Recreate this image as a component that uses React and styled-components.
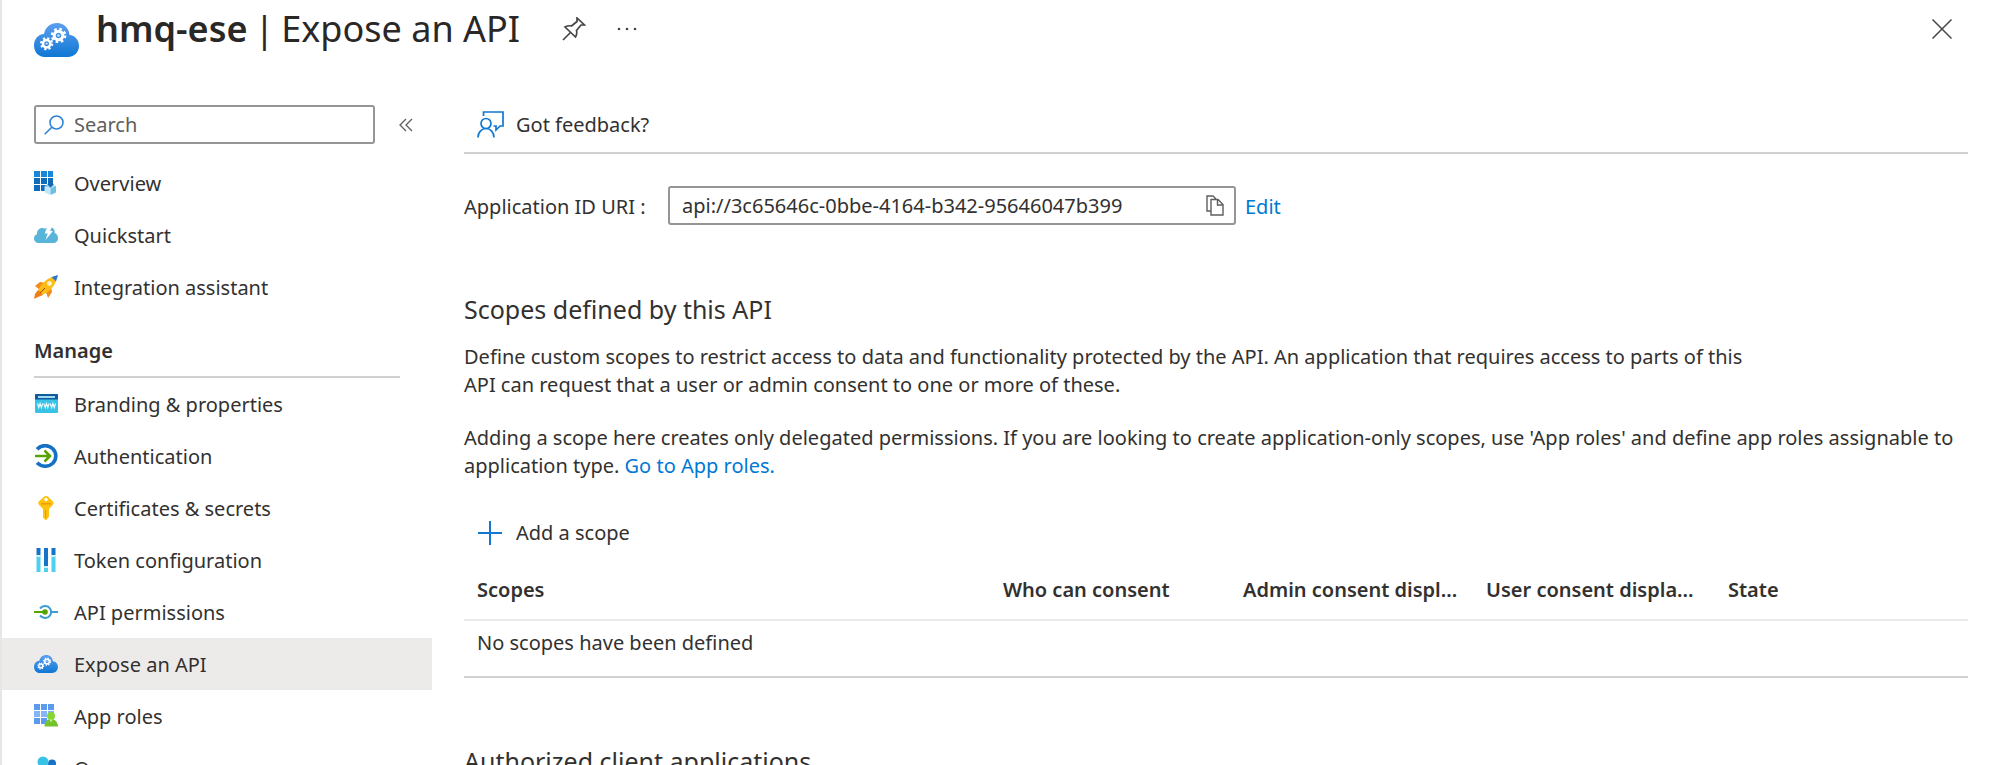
// App registration detail page. Left menu + "Expose an API" content.

import React from 'react';
import styled, { createGlobalStyle } from 'styled-components';

const App = () => {
  return (
    <>
      <GlobalStyle />
      <Page>
        <Header>
          <CloudGears width="45" height="34" />
          <Title>
            <strong>hmq-ese</strong>
            <span>|</span>
            <span>Expose an API</span>
          </Title>
          <IconButton aria-label="Pin">
            <PinIcon />
          </IconButton>
          <IconButton aria-label="More">
            <DotsIcon />
          </IconButton>
          <CloseButton aria-label="Close">
            <CloseIcon />
          </CloseButton>
        </Header>
        <Body>
          <SideMenu />
          <ExposeApi />
        </Body>
      </Page>
    </>
  );
};

// Left menu
const topMenu = [
  { label: 'Overview', icon: () => <OverviewIcon /> },
  { label: 'Quickstart', icon: () => <QuickstartIcon /> },
  { label: 'Integration assistant', icon: () => <RocketIcon /> },
];

const manageMenu = [
  { label: 'Branding & properties', icon: () => <BrandingIcon /> },
  { label: 'Authentication', icon: () => <AuthIcon /> },
  { label: 'Certificates & secrets', icon: () => <KeyIcon /> },
  { label: 'Token configuration', icon: () => <TokenIcon /> },
  { label: 'API permissions', icon: () => <PermissionIcon /> },
  { label: 'Expose an API', icon: () => <CloudGears width="24" height="18" />, active: true },
  { label: 'App roles', icon: () => <RolesIcon /> },
  { label: 'Owners', icon: () => <OwnersIcon /> },
];

const MenuList = ({ items }) => (
  <List>
    {items.map((item) => (
      <li key={item.label}>
        <MenuLink href="#" $active={item.active} aria-current={item.active ? 'page' : undefined}>
          <MenuIcon>{item.icon()}</MenuIcon>
          <MenuLabel>{item.label}</MenuLabel>
        </MenuLink>
      </li>
    ))}
  </List>
);

const SideMenu = () => (
  <Side>
    <SearchRow>
      <SearchBox>
        <SearchIcon />
        <SearchInput type="text" placeholder="Search" aria-label="Search" />
      </SearchBox>
      <IconButton aria-label="Collapse menu">
        <CollapseIcon />
      </IconButton>
    </SearchRow>
    <MenuList items={topMenu} />
    <MenuTitle>Manage</MenuTitle>
    <MenuList items={manageMenu} />
  </Side>
);

// Content
const ExposeApi = () => (
  <Main>
    <Toolbar>
      <CommandButton>
        <FeedbackIcon />
        Got feedback?
      </CommandButton>
    </Toolbar>
    <UriRow>
      <UriLabel htmlFor="app-uri">Application ID URI :</UriLabel>
      <UriBox>
        <UriInput id="app-uri" type="text" readOnly value="api://3c65646c-0bbe-4164-b342-95646047b399" />
        <IconButton aria-label="Copy">
          <CopyIcon />
        </IconButton>
      </UriBox>
      <EditLink href="#">Edit</EditLink>
    </UriRow>
    <SectionTitle>Scopes defined by this API</SectionTitle>
    <Text $narrow>
      Define custom scopes to restrict access to data and functionality protected by the API. An application that
      requires access to parts of this API can request that a user or admin consent to one or more of these.
    </Text>
    <Text>
      Adding a scope here creates only delegated permissions. If you are looking to create application-only scopes, use
      'App roles' and define app roles assignable to application type. <Link href="#">Go to App roles.</Link>
    </Text>
    <CommandButton>
      <PlusIcon />
      Add a scope
    </CommandButton>
    <Table>
      <colgroup>
        <col />
        <Col $w={240} />
        <Col $w={243} />
        <Col $w={242} />
        <Col $w={253} />
      </colgroup>
      <thead>
        <tr>
          <Th>Scopes</Th>
          <Th>Who can consent</Th>
          <Th>Admin consent displ...</Th>
          <Th>User consent displa...</Th>
          <Th>State</Th>
        </tr>
      </thead>
      <tbody>
        <tr>
          <Td colSpan={5}>No scopes have been defined</Td>
        </tr>
      </tbody>
    </Table>
    <SectionTitle>Authorized client applications</SectionTitle>
  </Main>
);

// Icons
const Gear = ({ x, y, r }) => (
  <g fill="none" stroke="#fff" transform={`translate(${x} ${y}) scale(${r / 7})`}>
    <circle r="4" strokeWidth="2.8" />
    <circle r="6" strokeWidth="2.4" strokeDasharray="2.356 2.356" />
    <circle r="1.2" fill="#cfe4fa" stroke="none" />
  </g>
);

const CloudGears = ({ width, height }) => (
  <svg width={width} height={height} viewBox="0 0 45 34">
    <defs>
      <linearGradient id="cloud" x1="0" y1="0" x2="0" y2="1">
        <stop offset="0" stopColor="#5c9fee" />
        <stop offset="1" stopColor="#0f78d5" />
      </linearGradient>
    </defs>
    <path
      fill="url(#cloud)"
      d="M10.5 34C4.5 34 0 29 0 22.5 0 16 4 11.5 10 11 11 4.5 16.5 0 23 0c7 0 12 5 12.5 12C41 12.5 45 17 45 22.8 45 29 40.5 34 34 34z"
    />
    <Gear x={24.5} y={12.5} r={7.6} />
    <Gear x={12.6} y={20.7} r={6.4} />
  </svg>
);

const PinIcon = () => (
  <svg width="24" height="24" viewBox="0 0 24 24" fill="none" stroke="#484644" strokeWidth="1.7">
    <path d="M1 23l7.5-7.5M3 10c2.2-1.2 4.5-1.500 6.500-1l5.500-4.500V1l7.500 7H19l-4.500 5.500c.6 2.300.2 4.500-1 6.500z" />
  </svg>
);

const DotsIcon = () => (
  <svg width="20" height="4" viewBox="0 0 20 4" fill="#484644">
    <circle cx="2" cy="2" r="1.3" />
    <circle cx="10" cy="2" r="1.3" />
    <circle cx="18" cy="2" r="1.3" />
  </svg>
);

const CloseIcon = () => (
  <svg width="20" height="20" viewBox="0 0 20 20" stroke="#484644" strokeWidth="1.5">
    <path d="M.5.5l19 19M19.5.5l-19 19" />
  </svg>
);

const SearchIcon = () => (
  <svg width="20" height="20" viewBox="0 0 20 20" fill="none" stroke="#2f83d6" strokeWidth="1.6">
    <circle cx="12.5" cy="7.5" r="6.5" />
    <path d="M7.8 12.2L.7 19.3" />
  </svg>
);

const CollapseIcon = () => (
  <svg width="14" height="14" viewBox="0 0 14 14" fill="none" stroke="#605e5c" strokeWidth="1.3">
    <path d="M7 1L1 7l6 6M13 1L7 7l6 6" />
  </svg>
);

const FeedbackIcon = () => (
  <svg width="27" height="27" viewBox="0 0 27 27" fill="none" stroke="#1078d2" strokeWidth="1.7">
    <path d="M6.5 5V1H26v14h-3l-4 4v-4h-2.5" />
    <circle cx="9" cy="12.5" r="5" />
    <path d="M1 26.5c0-5 3.500-9 8-9s8 4 8 9" />
  </svg>
);

const CopyIcon = () => (
  <svg width="18" height="21" viewBox="0 0 18 21" fill="none" stroke="#605e5c" strokeWidth="1.4">
    <path d="M5 16H1V1h6l3 3M5 4.5h7l5 5V20H5zM11.5 5v5H17" />
  </svg>
);

const PlusIcon = () => (
  <svg width="27" height="26" viewBox="0 0 27 26" stroke="#1078d2" strokeWidth="2">
    <path d="M13 1v24M1 13h24" />
  </svg>
);

const OverviewIcon = () => (
  <svg width="24" height="24" viewBox="0 0 24 24">
    <path fill="#1a86d9" d="M0 0h6v6H0zM7 0h6v6H7zM14 0h5v6h-5z" />
    <path fill="#0f6cbd" d="M0 7h6v6H0zM7 7h6v6H7zM14 7h5v6h-5zM0 14h6v6H0zM7 14h6v6H7z" />
    <path fill="#9cd5f0" d="M10.500 15l5.500-2 6 2-5.500 2.500z" />
    <path fill="#c3e6f6" d="M10.500 15l6 2.500V24l-6-2.500z" />
    <path fill="#6cbfe4" d="M22 15l-5.500 2.500V24l5.500-2.500z" />
    <path fill="#1565b0" d="M15 10h3v3h2l-3.500 3.500L13 13h2z" />
  </svg>
);

const QuickstartIcon = () => (
  <svg width="24" height="18" viewBox="0 0 24 18">
    <path
      fill="#59b4d9"
      d="M5 17c-3 0-5-2-5-4.600 0-2 1.200-3.700 3-4.200C2.800 4.500 5 2 8.500 2c1 0 2 .3 2.700.8C12.500 1.500 14 1 15.500 1 19 1 21 3.500 20.800 7c2 .6 3.200 2.800 3.200 5.200 0 2.800-2 4.800-4.800 4.800z"
    />
    <path fill="#fff" d="M13.500 0h5l-2.500 5h3l-7.500 9 2.200-6.500h-3z" />
  </svg>
);

const RocketIcon = () => (
  <svg width="24" height="24" viewBox="0 0 24 24">
    <path fill="#f28a1c" d="M1 11l5-4 6 1-6 7zM17 12l1 5-4 6-2-6z" />
    <path fill="#fbbc16" d="M18 2C12 4 6 10 4 16l4 4c6-2 12-8 14-14z" />
    <path fill="#ef7d16" d="M4 15l5 5-5 2-4 2 1-5z" />
    <path fill="#2f73c4" d="M24 0l-6.500 2L22 6.500z" />
    <circle cx="15.5" cy="8.5" r="2.4" fill="#fff3c9" />
    <path stroke="#8f4a0c" strokeWidth="1" d="M6 18l5-5" />
  </svg>
);

const BrandingIcon = () => (
  <svg width="24" height="20" viewBox="0 0 24 20">
    <rect x="1" width="23" height="19" rx="1" fill="#37c2e6" />
    <path fill="#0f5b9c" d="M2 0h21a1 1 0 0 1 1 1v4.500H1V1a1 1 0 0 1 1-1z" />
    <path fill="#9fd9f2" d="M4 2h17v2H4z" />
    <path
      fill="none"
      stroke="#e6f9fe"
      strokeWidth="1.2"
      d="M3.500 9.500l1.300 4 1.300-4 1.300 4 1.300-4M9.900 9.500l1.300 4 1.300-4 1.300 4 1.300-4M16.300 9.500l1.300 4 1.300-4 1.300 4 1.300-4"
    />
  </svg>
);

const AuthIcon = () => (
  <svg width="24" height="24" viewBox="0 0 24 24" fill="none">
    <path stroke="#1470c4" strokeWidth="3.6" d="M3 5.200C8 0 15 1 18.800 4.800c4 4 4 10.400 0 14.400-4 3.800-10.800 4.400-15.800-.4" />
    <path stroke="#57a300" strokeWidth="2.6" d="M1 12h14M10.500 6.500L16 12l-5.500 5.500" />
  </svg>
);

const KeyIcon = () => (
  <svg width="24" height="24" viewBox="0 0 24 24">
    <path fill="#fdc310" d="M12 0c1 0 1.600.4 2.300 1l4.500 4.300c1 1 1 2.400 0 3.500L15 13v7.500L12.500 24h-1L9 21.500V13L5 8.800c-1-1.100-1-2.500 0-3.500L9.700 1c.7-.6 1.300-1 2.300-1z" />
    <path fill="#f09a0a" d="M7 7h10v1.400H7zM11 14h1.200v8H11z" />
    <circle cx="12" cy="3.4" r="1.7" fill="#fff" />
  </svg>
);

const TokenIcon = () => (
  <svg width="24" height="26" viewBox="0 0 24 26">
    <path fill="#50d0ee" d="M2.500 9h4v16h-4zM10 19h4v6h-4zM17.500 9h4v16h-4z" />
    <path fill="#1673c8" d="M2.500 1h4v7h-4zM10 1h4v19h-4zM17.500 1h4v7h-4z" />
    <path fill="#c8f2fb" d="M2.500 8h4v2h-4zM10 19h4v2h-4zM17.500 8h4v2h-4z" />
  </svg>
);

const PermissionIcon = () => (
  <svg width="24" height="14" viewBox="0 0 24 14" fill="none">
    <path stroke="#3f9bd3" strokeWidth="2" d="M6 3.500c3-3.500 8-3.200 10 0 1.400 2.200 1.400 4.800 0 7-2 3.200-7 3.500-10 0M17.500 7H24" />
    <path stroke="#57a300" strokeWidth="2" d="M0 7h10" />
    <circle cx="11" cy="7" r="2.8" fill="#57a300" />
  </svg>
);

const RolesIcon = () => (
  <svg width="24" height="24" viewBox="0 0 24 24">
    <path fill="#5a9bee" d="M0 0h6v6H0zM7 0h6v6H7zM14 0h6v6h-6zM0 14h6v6H0zM7 14h6v6H7z" />
    <path fill="#84b6f5" d="M0 7h6v6H0zM7 7h6v6H7zM14 7h6v6h-6z" />
    <path fill="#76c22c" d="M10.500 22.500c0-4 2.500-7.500 6.500-7.500s7 3.500 7 7.500z" />
    <circle cx="17" cy="12" r="4" fill="#86d633" />
    <path fill="#c8efa0" d="M15.500 15.500h3L17 18.500z" />
  </svg>
);

const OwnersIcon = () => (
  <svg width="24" height="24" viewBox="0 0 24 24">
    <circle cx="18" cy="7.5" r="4" fill="#1673c8" />
    <path fill="#1673c8" d="M12 20c0-4 2.500-7 6-7s6 3 6 7z" />
    <circle cx="9" cy="6" r="5.5" fill="#37c2e6" />
    <path fill="#37c2e6" d="M0 23c0-6 3.500-10 9-10s9 4 9 10z" />
  </svg>
);

const GlobalStyle = createGlobalStyle`
  * {
    box-sizing: border-box;
  }
  body {
    margin: 0;
    background: #fff;
    color: #323130;
    font-family: 'Noto Sans', 'Open Sans', sans-serif;
    font-size: 20px;
    line-height: 28px;
  }
  button, input {
    font: inherit;
    color: inherit;
  }
  svg {
    display: block;
    flex-shrink: 0;
  }
`;

const Page = styled.div`
  height: 100vh;
  overflow: hidden;
  border-left: 2px solid #e6e6e6;
`;
const Header = styled.header`
  display: flex;
  align-items: center;
  height: 80px;
  padding: 0 47px 0 32px;
`;
const Title = styled.h1`
  display: flex;
  gap: 7px;
  margin: 0 42px 22px 17px;
  font-size: 36px;
  line-height: 58px;
  font-weight: 400;
  white-space: nowrap;
  color: #292827;
  strong {
    font-weight: 600;
  }
`;
const IconButton = styled.button`
  display: flex;
  padding: 0;
  border: 0;
  background: none;
  ${Header} & {
    margin: 0 31px 22px 0;
  }
`;
const CloseButton = styled(IconButton)`
  ${Header} && {
    margin: 0 0 22px auto;
  }
`;
const Body = styled.div`
  display: flex;
  align-items: flex-start;
`;
const Side = styled.nav`
  width: 430px;
  flex-shrink: 0;
  padding-top: 25px;
`;
const SearchRow = styled.div`
  display: flex;
  align-items: center;
  gap: 24px;
  margin-bottom: 13px;
  padding-left: 32px;
`;
const SearchBox = styled.div`
  display: flex;
  align-items: center;
  gap: 10px;
  width: 341px;
  height: 39px;
  padding: 0 8px;
  border: 2px solid #979593;
  border-radius: 3px;
`;
const SearchInput = styled.input`
  flex: 1;
  min-width: 0;
  padding: 0;
  border: 0;
  outline: 0;
  background: none;
  &::placeholder {
    color: #605e5c;
    opacity: 1;
  }
`;
const List = styled.ul`
  margin: 0;
  padding: 0;
  list-style: none;
`;
const MenuLink = styled.a`
  display: flex;
  align-items: center;
  gap: 16px;
  height: 52px;
  padding-left: 32px;
  color: inherit;
  text-decoration: none;
  white-space: nowrap;
  background: ${(props) => (props.$active ? '#edebe9' : 'none')};
`;
const MenuIcon = styled.span`
  display: flex;
  justify-content: center;
  width: 24px;
`;
const MenuLabel = styled.span`
  padding-top: 2px;
`;
const MenuTitle = styled.h2`
  margin: 0 32px;
  padding: 24px 0 11px;
  border-bottom: 2px solid #d2d0ce;
  font-size: 20px;
  line-height: 28px;
  font-weight: 600;
`;
const Main = styled.main`
  flex: 1;
  min-width: 0;
  padding: 17px 31px 0 32px;
`;
const Toolbar = styled.div`
  display: flex;
  align-items: center;
  height: 57px;
  border-bottom: 2px solid #d2d0ce;
`;
const CommandButton = styled.button`
  display: flex;
  align-items: center;
  gap: 12px;
  height: 56px;
  padding: 0 13px;
  border: 0;
  background: none;
`;
const UriRow = styled.div`
  display: flex;
  align-items: center;
  gap: 9px;
  margin: 32px 0 66px;
`;
const UriLabel = styled.label`
  width: 195px;
  padding-top: 2px;
`;
const UriBox = styled.div`
  display: flex;
  align-items: center;
  width: 568px;
  height: 39px;
  padding: 0 10px 0 12px;
  border: 2px solid #979593;
  border-radius: 3px;
`;
const UriInput = styled.input`
  flex: 1;
  min-width: 0;
  padding: 0;
  border: 0;
  outline: 0;
  background: none;
`;
const Link = styled.a`
  color: #0078d4;
  text-decoration: none;
`;
const EditLink = styled(Link)`
  padding-top: 2px;
`;
const SectionTitle = styled.h2`
  margin: 0 0 16px;
  font-size: 25px;
  line-height: 36px;
  font-weight: 400;
`;
const Text = styled.p`
  max-width: ${(props) => (props.$narrow ? '1300px' : 'none')};
  margin: 0 0 25px;
`;
const Table = styled.table`
  width: 100%;
  margin-bottom: 65px;
  border-collapse: collapse;
  table-layout: fixed;
  border-bottom: 2px solid #d2d0ce;
`;
const Col = styled.col`
  width: ${(props) => props.$w}px;
`;
const Th = styled.th`
  height: 59px;
  padding: 0 13px;
  border-bottom: 2px solid #edebe9;
  font-weight: 600;
  text-align: left;
  white-space: nowrap;
`;
const Td = styled.td`
  height: 56px;
  padding: 8px 13px 19px;
`;

export default App;
